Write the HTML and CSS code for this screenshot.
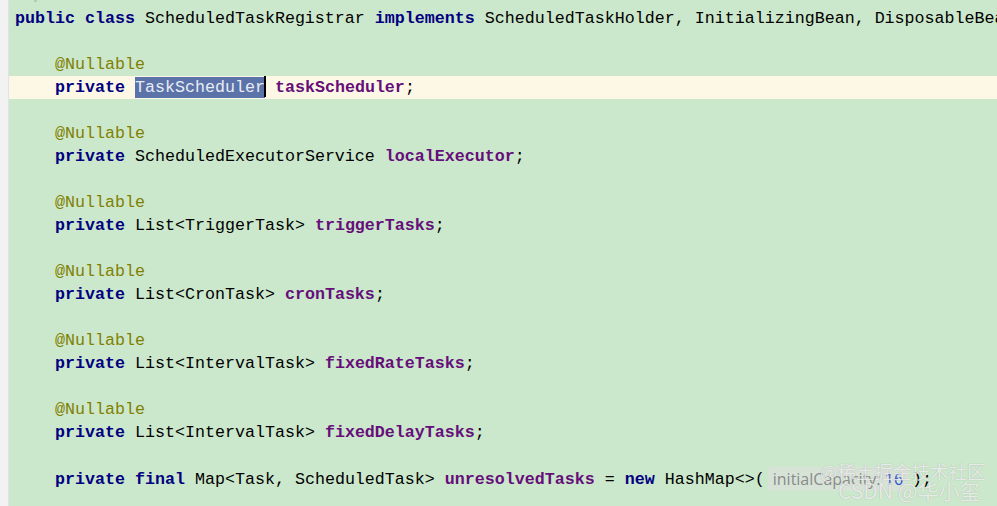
FILE: index.html
```html
<!DOCTYPE html>
<html>
<head>
<meta charset="utf-8">
<link rel="stylesheet" href="styles.css">
</head>
<body>
<div class="editor">
  <div class="gutter"><span class="fold-mark"></span></div>
  <div class="code">
    <div class="line"><span class="kw">public class</span> ScheduledTaskRegistrar <span class="kw">implements</span> ScheduledTaskHolder, InitializingBean, DisposableBean {</div>
    <div class="line"></div>
    <div class="line in"><span class="ann">@Nullable</span></div>
    <div class="line in current"><span class="kw">private</span> <span class="sel">TaskScheduler</span><span class="caret"></span> <span class="fld">taskScheduler</span>;</div>
    <div class="line"></div>
    <div class="line in"><span class="ann">@Nullable</span></div>
    <div class="line in"><span class="kw">private</span> ScheduledExecutorService <span class="fld">localExecutor</span>;</div>
    <div class="line"></div>
    <div class="line in"><span class="ann">@Nullable</span></div>
    <div class="line in"><span class="kw">private</span> List&lt;TriggerTask&gt; <span class="fld">triggerTasks</span>;</div>
    <div class="line"></div>
    <div class="line in"><span class="ann">@Nullable</span></div>
    <div class="line in"><span class="kw">private</span> List&lt;CronTask&gt; <span class="fld">cronTasks</span>;</div>
    <div class="line"></div>
    <div class="line in"><span class="ann">@Nullable</span></div>
    <div class="line in"><span class="kw">private</span> List&lt;IntervalTask&gt; <span class="fld">fixedRateTasks</span>;</div>
    <div class="line"></div>
    <div class="line in"><span class="ann">@Nullable</span></div>
    <div class="line in"><span class="kw">private</span> List&lt;IntervalTask&gt; <span class="fld">fixedDelayTasks</span>;</div>
    <div class="line"></div>
    <div class="line in"><span class="kw">private final</span> Map&lt;Task, ScheduledTask&gt; <span class="fld">unresolvedTasks</span> = <span class="kw">new</span> HashMap&lt;&gt;(<span class="hint">initialCapacity: <span class="num">16</span></span>);</div>
    <div class="line"></div>
  </div>
</div>
<div class="watermark wm1">@稀土掘金技术社区</div>
<div class="watermark wm2">CSDN @华小玺</div>
</body>
</html>
```
FILE: styles.css
```css
html, body {
  margin: 0;
  padding: 0;
  width: 997px;
  height: 506px;
  overflow: hidden;
  background: #cce8cc;
}
.editor {
  display: flex;
  height: 506px;
  position: relative;
}
.gutter {
  width: 8px;
  background: #f2f2f2;
  border-right: 1px solid #e2e2e2;
  flex: none;
  position: relative;
}
.fold-mark {
  position: absolute;
  left: 34px;
  top: 0;
  width: 3px;
  height: 2px;
  background: #b8c8b8;
}
.code {
  flex: 1;
  min-width: 0;
  background: #cce8cc;
  padding-top: 7px;
  font-family: "Liberation Mono", "Courier New", monospace;
  font-size: 16.667px;
  color: #000;
}
.line {
  height: 23px;
  line-height: 23px;
  padding-left: 6px;
  white-space: pre;
}
.line.in {
  padding-left: 46px;
}
.line.current {
  background: #fdf8e5;
}
.kw {
  color: #000080;
  font-weight: bold;
}
.ann {
  color: #808000;
}
.fld {
  color: #660e7a;
  font-weight: bold;
}
.sel {
  display: inline-block;
  background: #5b73a8;
  color: #e8ecf4;
  line-height: 21px;
  height: 21px;
}
.caret {
  display: inline-block;
  width: 2px;
  height: 21px;
  background: #000;
  vertical-align: -5px;
  margin-left: -1px;
  margin-right: -1px;
}
.hint {
  display: inline-block;
  margin: 0 3px 0 3px;
  padding: 0 6px 0 5px;
  background: #d7e3d7;
  border-radius: 4px;
  font-family: "Open Sans", "Noto Sans", sans-serif;
  font-size: 16px;
  color: #8a8a8a;
  line-height: 24px;
  vertical-align: -1px;
}
.num {
  color: #2f4bd0;
}
.watermark {
  position: absolute;
  font-family: "Noto Sans CJK SC", "Noto Sans", sans-serif;
  color: rgba(255, 255, 255, 0.75);
  text-shadow: 0 0 1px rgba(70, 70, 70, 0.4);
  white-space: nowrap;
}
.wm1 {
  left: 820px;
  top: 458px;
  font-size: 18.5px;
}
.wm2 {
  left: 838px;
  top: 475px;
  font-size: 21px;
}
```
